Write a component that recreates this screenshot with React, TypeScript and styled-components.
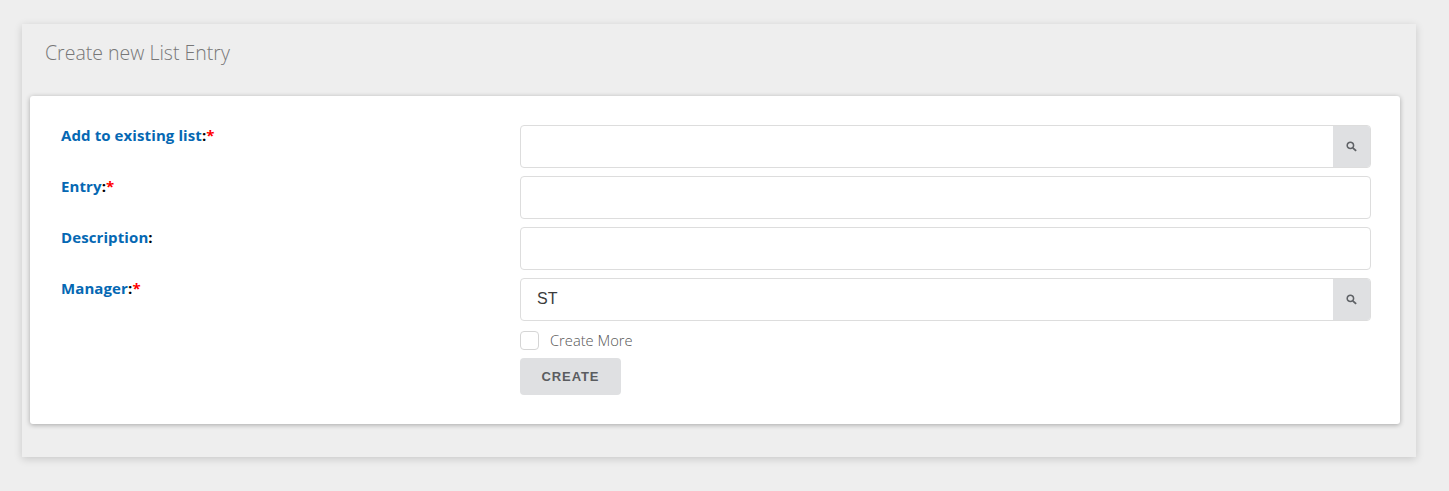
import React from "react";
import styled, { createGlobalStyle } from "styled-components";

const Global = createGlobalStyle`
  html, body { margin: 0; padding: 0; background: #eeeeee; }
  body { height: 491px; overflow: hidden; font-family: "Open Sans", "Noto Sans", sans-serif; }
`;

const Page = styled.div`
  padding: 24px 33px 0 22px;
`;

const Panel = styled.section`
  height: 433px;
  background: #eeeeee;
  box-shadow: 0 2px 8px rgba(0, 0, 0, 0.16);
  padding: 0 16px 0 8px;
  box-sizing: border-box;
`;

const Title = styled.h2`
  margin: 0;
  height: 72px;
  padding: 15px 0 0 15px;
  box-sizing: border-box;
  font-family: "Open Sans", sans-serif;
  font-weight: 300;
  font-size: 19.5px;
  line-height: 27px;
  color: #777777;
`;

const Card = styled.div`
  height: 328px;
  box-sizing: border-box;
  background: #ffffff;
  border-radius: 3px;
  box-shadow: 0 1px 5px rgba(0, 0, 0, 0.3);
  padding: 29px 29px 0 31px;
  display: grid;
  grid-template-columns: 459px 851px;
  grid-auto-rows: 43px;
  row-gap: 8px;
`;

const Label = styled.div`
  font-family: "Open Sans", sans-serif;
  font-size: 15px;
  font-weight: 700;
  line-height: 21px;
  letter-spacing: 0.1px;
  color: #000000;
`;

const LabelText = styled.span`
  color: #0568b3;
`;

const Required = styled.span`
  color: #ff0000;
`;

const Field = styled.div`
  display: flex;
  height: 43px;
  box-sizing: border-box;
  border: 1px solid #dddddd;
  border-radius: 4px;
  overflow: hidden;
  background: #ffffff;
`;

const Input = styled.input`
  flex: 1;
  min-width: 0;
  border: 0;
  outline: 0;
  padding: 0 16px 2px;
  background: transparent;
  font-family: "Liberation Sans", Arial, sans-serif;
  font-size: 16px;
  color: #3c3c3c;
`;

const SearchButton = styled.button`
  width: 38px;
  margin: -1px -1px -1px 0;
  border: 0;
  padding: 0 1px 0 0;
  background: #dfe0e2;
  display: flex;
  align-items: center;
  justify-content: center;
  color: #5f6266;
`;

const Actions = styled.div`
  grid-column: 2;
  display: flex;
  flex-direction: column;
  align-items: flex-start;
  margin-top: 2px;
`;

const CheckRow = styled.label`
  display: flex;
  align-items: center;
  height: 19px;
  gap: 11px;
`;

const CheckCaption = styled.span`
  padding-bottom: 2px;
  font-family: "Open Sans", sans-serif;
  font-weight: 300;
  font-size: 14.7px;
  color: #555555;
`;

const Box = styled.span`
  width: 19px;
  height: 19px;
  box-sizing: border-box;
  border: 1px solid #d5d5d5;
  border-radius: 4px;
  background: #ffffff;
`;

const CreateButton = styled.button`
  margin-top: 8px;
  width: 101px;
  height: 37px;
  border: 0;
  border-radius: 4px;
  background: #dfe0e2;
  color: #5a5c5f;
  font-family: "Liberation Sans", Arial, sans-serif;
  font-weight: 700;
  font-size: 13px;
  letter-spacing: 0.9px;
  flex-shrink: 0;
`;

const SearchIcon = () => (
  <svg width="11" height="11" viewBox="0 0 10 10" fill="none" stroke="currentColor" aria-hidden="true">
    <circle cx="4" cy="4" r="2.9" strokeWidth="1.4" />
    <path d="M6.2 6.2 9.2 9" strokeWidth="1.7" />
  </svg>
);

type RowProps = { label: string; required?: boolean; search?: boolean; value?: string };

const Row = ({ label, required, search, value }: RowProps) => (
  <>
    <Label>
      <LabelText>{label}</LabelText>:{required && <Required>*</Required>}
    </Label>
    <Field>
      <Input defaultValue={value} />
      {search && (
        <SearchButton type="button">
          <SearchIcon />
        </SearchButton>
      )}
    </Field>
  </>
);

export default function App() {
  return (
    <Page>
      <Global />
      <Panel>
        <Title>Create new List Entry</Title>
        <Card>
          <Row label="Add to existing list" required search />
          <Row label="Entry" required />
          <Row label="Description" />
          <Row label="Manager" required search value="ST" />
          <Actions>
            <CheckRow>
              <Box />
              <CheckCaption>Create More</CheckCaption>
            </CheckRow>
            <CreateButton type="button">CREATE</CreateButton>
          </Actions>
        </Card>
      </Panel>
    </Page>
  );
}
